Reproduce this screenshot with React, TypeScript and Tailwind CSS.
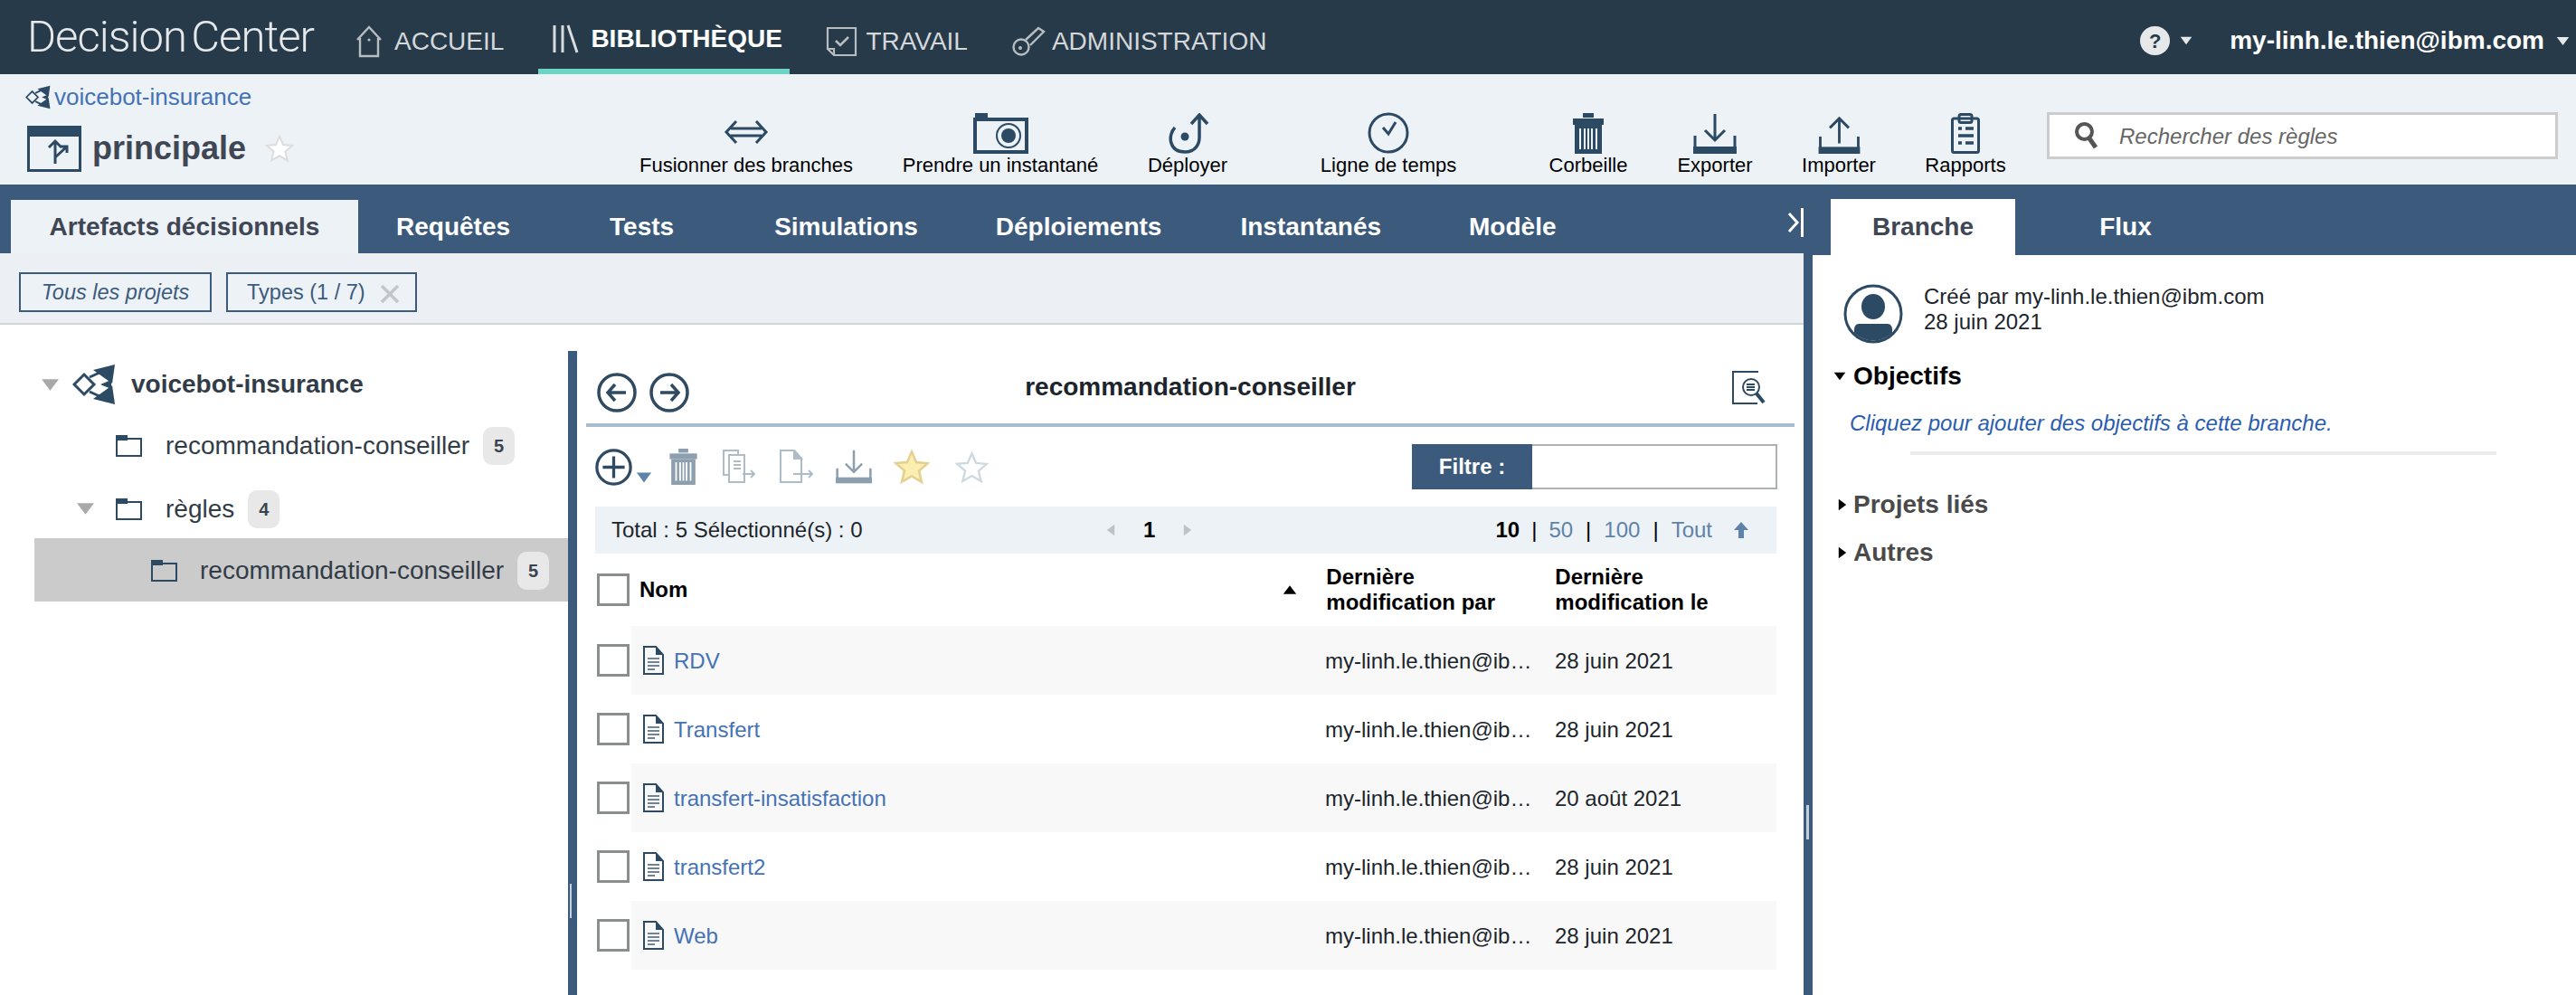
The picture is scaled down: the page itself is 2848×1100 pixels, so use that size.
import { ReactNode } from "react"

const navy = "#2c4a63"

const Home = () => (
    <svg width="30" height="36" viewBox="0 0 30 36" fill="none" stroke="#b9bdc0" strokeWidth="2.4">
        <path d="M2 16 15 2l13 14M5 14v20h20V14" />
        <circle cx="15" cy="16" r="1.6" fill="#b9bdc0" stroke="none" />
    </svg>
)

const Library = () => (
    <svg width="30" height="34" viewBox="0 0 30 34" fill="none" stroke="#d9dcde" strokeWidth="3">
        <path d="M3 2v30M12 2v30M18 2l10 30" />
    </svg>
)

const Task = () => (
    <svg width="35" height="34" viewBox="0 0 35 34" fill="none" stroke="#b9bdc0" strokeWidth="2.2">
        <path d="M2 2h31v30H9l-7-7z" />
        <path d="M2 25h7v7" />
        <path d="m11 16 5 5 9-9" strokeWidth="2.6" />
    </svg>
)

const Key = () => (
    <svg width="37" height="34" viewBox="0 0 37 34" fill="none" stroke="#b9bdc0" strokeWidth="2.4">
        <circle cx="10" cy="23" r="8.5" />
        <circle cx="9" cy="24" r="2" fill="#b9bdc0" stroke="none" />
        <path d="m15 15 14-13 6 4-15 15" />
    </svg>
)

const ProjectIcon = ({ w, h }: { w: number, h: number }) => (
    <svg width={w} height={h} viewBox="0 0 48 44" className="shrink-0">
        <path d="M2 22 13 11l11 11-11 11z" fill="none" stroke={navy} strokeWidth="3" />
        <path d="M47 0 23 6l21 15z" fill={navy} />
        <path d="M47 44 23 38l21-15z" fill={navy} />
        <path d="M31 22l12-5v10z" fill={navy} />
        <path d="M19 14 30 9M19 30l11 5" stroke={navy} strokeWidth="3" />
    </svg>
)

const BranchIcon = () => (
    <svg width="60" height="51" viewBox="0 0 60 51" fill="none">
        <rect x="1.5" y="1.5" width="57" height="48" stroke={navy} strokeWidth="3" />
        <rect x="0" y="0" width="60" height="12" fill={navy} />
        <path d="M31 42V17M24 24l7-7 7 7M31 35l13-12M37 23h7v7" stroke={navy} strokeWidth="3" />
    </svg>
)

const Star = ({ size, fill, stroke }: { size: number, fill: string, stroke: string }) => (
    <svg width={size} height={size} viewBox="0 0 24 24" fill={fill} stroke={stroke} strokeWidth="1.5" className="shrink-0">
        <path d="m12 2 3 7 7.6.7-5.8 5 1.8 7.4L12 18.2 5.4 22l1.8-7.4-5.8-5L9 9z" />
    </svg>
)

const Caret = ({ size = 20, color = "#a9a9a9", dir = "down" }: { size?: number, color?: string, dir?: string }) => (
    <svg width={size} height={size} viewBox="0 0 20 20" fill={color} className="shrink-0">
        {dir === "down" && <path d="M1 4h18L10 16z" />}
        {dir === "up" && <path d="M1 16h18L10 4z" />}
        {dir === "right" && <path d="M4 1v18l12-9z" />}
        {dir === "left" && <path d="M16 1v18L4 10z" />}
    </svg>
)

const Folder = () => (
    <svg width="29" height="24" viewBox="0 0 29 24" fill="none" className="shrink-0">
        <rect x="1" y="4" width="27" height="19" stroke={navy} strokeWidth="2" />
        <rect x="0" y="0" width="13" height="6" fill={navy} />
    </svg>
)

const FileIcon = () => (
    <svg width="23" height="32" viewBox="0 0 23 32" fill="none" className="shrink-0">
        <path d="M1 1h13l8 9v21H1z" stroke={navy} strokeWidth="2" />
        <path d="M14 1v9h8z" fill={navy} />
        <path d="M5 14h13M5 18h13M5 22h13M5 26h8" stroke="#6f8497" strokeWidth="2" />
    </svg>
)

const Merge = () => (
    <svg width="50" height="28" viewBox="0 0 50 28" fill="none" stroke={navy} strokeWidth="3" className="mb-[10px]">
        <path d="M14 2 3 14l11 12M36 2l11 12-11 12M8 10h34M8 18h34" />
    </svg>
)

const Camera = () => (
    <svg width="61" height="45" viewBox="0 0 61 45" fill="none" stroke={navy}>
        <rect x="2" y="7" width="57" height="36" strokeWidth="4" />
        <rect x="2" y="0" width="14" height="8" fill={navy} stroke="none" />
        <circle cx="39" cy="25" r="13" strokeWidth="2" />
        <circle cx="39" cy="25" r="8" fill={navy} stroke="none" />
    </svg>
)

const Deploy = () => (
    <svg width="47" height="45" viewBox="0 0 47 45" fill="none" stroke={navy} strokeWidth="3.5">
        <path d="M9 16C1 24 2 43 20 43c12 0 16-9 16-16V3M27 12l9-10 9 10" />
        <circle cx="20" cy="26" r="4.5" fill={navy} stroke="none" />
    </svg>
)

const Clock = () => (
    <svg width="46" height="46" viewBox="0 0 46 46" fill="none" stroke={navy}>
        <circle cx="23" cy="23" r="21" strokeWidth="3" />
        <path d="m17 17 6 7 8-13" strokeWidth="3" />
    </svg>
)

const Trash = ({ w, h, color }: { w: number, h: number, color: string }) => (
    <svg width={w} height={h} viewBox="0 0 34 45" fill={color}>
        <rect x="11" y="0" width="12" height="5" />
        <rect x="0" y="6" width="34" height="7" />
        <path fillRule="evenodd" d="M2 13h30v32H2zM7 17v23h2V17zM12 17v23h2V17zM16 17v23h2V17zM20 17v23h2V17zM25 17v23h2V17z" />
    </svg>
)

const Tray = ({ up, color, w, h }: { up?: boolean, color: string, w: number, h: number }) => (
    <svg width={w} height={h} viewBox="0 0 48 44" fill="none" stroke={color} strokeWidth="3">
        <path d="M2 24v15h44V24" />
        <rect x="0" y="36" width="48" height="8" fill={color} stroke="none" />
        {up ? <path d="M24 32V3M13 14 24 3l11 11" /> : <path d="M24 0v29M13 18l11 11 11-11" />}
    </svg>
)

const Report = () => (
    <svg width="32" height="45" viewBox="0 0 32 45" fill="none">
        <rect x="1.5" y="6" width="29" height="37.5" rx="2" stroke={navy} strokeWidth="3" />
        <rect x="9" y="1.5" width="14" height="9" rx="2" stroke={navy} strokeWidth="3" />
        <path d="M8 17h4M16 17h9M8 25h17M8 33h4M16 33h9" stroke={navy} strokeWidth="3.5" />
    </svg>
)

const Search = () => (
    <svg width="27" height="32" viewBox="0 0 27 32" fill="none" stroke="#555" className="shrink-0">
        <circle cx="11.5" cy="11.5" r="8.5" strokeWidth="4" />
        <path d="m17 19 7 10" strokeWidth="5" />
    </svg>
)

const Circled = ({ d, w = 44 }: { d: string, w?: number }) => (
    <svg width={w} height={w} viewBox="0 0 44 44" fill="none" stroke="#2f4a61" strokeWidth="3.5" className="shrink-0">
        <circle cx="22" cy="22" r="20" />
        <path d={d} />
    </svg>
)

const CopyTo = () => (
    <svg width="37" height="38" viewBox="0 0 37 38" fill="none" stroke="#aebcc8" strokeWidth="2">
        <path d="M7 28H1V1h16v5" />
        <path d="M7 6h17v30H7zM12 13h8M12 17h8M12 21h8M22 27h13M31 23l4 4-4 4" />
    </svg>
)

const DocTo = () => (
    <svg width="38" height="38" viewBox="0 0 38 38" fill="none" stroke="#aebcc8" strokeWidth="2">
        <path d="M1 1h15l8 9v26H1zM15 27h21M32 23l4 4-4 4" />
        <path d="M16 1v9h8z" fill="#aebcc8" />
    </svg>
)

const DocSearch = () => (
    <svg width="37" height="37" viewBox="0 0 37 37" fill="none" stroke={navy} strokeWidth="2">
        <path d="M29 1H1v35h27" />
        <circle cx="21" cy="18" r="9" />
        <path d="M16 15h9M16 18h9M16 21h9" />
        <path d="m27 25 8 10" strokeWidth="4" />
    </svg>
)

const Avatar = () => (
    <svg width="66" height="66" viewBox="0 0 66 66" className="shrink-0">
        <circle cx="33" cy="33" r="31" fill="#fff" stroke={navy} strokeWidth="3" />
        <ellipse cx="33" cy="25" rx="13" ry="14" fill={navy} />
        <path d="M17 44h32c3 0 5 3 5 6v4a30 30 0 0 1-42 0v-4c0-3 2-6 5-6z" fill={navy} />
    </svg>
)

const NavItem = ({ icon, label, gap, ml, active }: { icon: ReactNode, label: string, gap: string, ml: string, active?: boolean }) => (
    <div className={`flex items-center pt-[10px] ${ml} ${gap} ${active ? "border-b-[6px] border-[#6dd3c2] w-[278px] pl-[15px] text-white font-bold" : "text-[#d5d8da]"}`}>
        {icon}
        <span>{label}</span>
    </div>
)

const Action = ({ icon, label, width }: { icon: ReactNode, label: string, width: string }) => (
    <div className={`flex flex-col items-center justify-end pb-[8px] text-[22px] leading-[26px] text-black ${width}`}>
        <div className="flex h-[48px] items-end">{icon}</div>
        <span className="whitespace-nowrap">{label}</span>
    </div>
)

const Badge = ({ n }: { n: number }) => (
    <span className="flex h-[42px] w-[35px] shrink-0 items-center justify-center rounded-[10px] bg-[#e8e8e8] text-[20px] font-bold text-[#3a4450]">{n}</span>
)

const Checkbox = () => <div className="h-[36px] w-[36px] shrink-0 border-[3px] border-[#8a8f8c] bg-white"></div>

const rows = [
    { name: "RDV", date: "28 juin 2021" },
    { name: "Transfert", date: "28 juin 2021" },
    { name: "transfert-insatisfaction", date: "20 août 2021" },
    { name: "transfert2", date: "28 juin 2021" },
    { name: "Web", date: "28 juin 2021" },
]

const App = () => {
    return (
        <div className="flex h-[1100px] w-[2848px] flex-col overflow-hidden bg-white font-['Liberation_Sans',Arial,sans-serif]">

            <div className="flex h-[82px] shrink-0 items-stretch bg-[#263a4a] pl-[30px] text-[28px]">
                <div className="flex w-[317px] items-center justify-between whitespace-nowrap font-['Roboto',sans-serif] text-[49px] font-light tracking-[-1px] text-[#e6e8ea]">
                    <span>Decision</span><span>Center</span>
                </div>
                <NavItem icon={<Home />} label="ACCUEIL" gap="gap-[13px]" ml="ml-[46px]" />
                <NavItem icon={<Library />} label="BIBLIOTHÈQUE" gap="gap-[13px]" ml="ml-[38px]" active />
                <NavItem icon={<Task />} label="TRAVAIL" gap="gap-[9px]" ml="ml-[40px]" />
                <NavItem icon={<Key />} label="ADMINISTRATION" gap="gap-[7px]" ml="ml-[49px]" />
                <div className="ml-auto flex items-center pr-[7px] pt-[8px]">
                    <span className="flex h-[32px] w-[33px] items-center justify-center rounded-full bg-[#e6e8ea] text-[22px] font-bold text-[#263a4a]">?</span>
                    <span className="ml-[11px]"><Caret size={14} color="#e6e8ea" /></span>
                    <span className="ml-[41px] font-bold text-white">my-linh.le.thien@ibm.com</span>
                    <span className="ml-[13px]"><Caret size={15} color="#e6e8ea" /></span>
                </div>
            </div>

            <div className="flex h-[122px] shrink-0 bg-[#edf2f6]">
                <div className="w-[690px] pl-[28px] pt-[10px]">
                    <div className="flex h-[30px] items-center gap-[4px] text-[26px] text-[#4472b5]">
                        <ProjectIcon w={28} h={27} />
                        <span>voicebot-insurance</span>
                    </div>
                    <div className="mt-[15px] flex items-center pl-[2px]">
                        <BranchIcon />
                        <span className="ml-[12px] text-[36px] font-bold text-[#3f4654]">principale</span>
                        <span className="ml-[21px]"><Star size={32} fill="#ffffff" stroke="#dddddd" /></span>
                    </div>
                </div>
                <Action icon={<Merge />} label="Fusionner des branches" width="w-[270px]" />
                <Action icon={<Camera />} label="Prendre un instantané" width="w-[292px]" />
                <Action icon={<Deploy />} label="Déployer" width="w-[122px]" />
                <Action icon={<Clock />} label="Ligne de temps" width="w-[322px]" />
                <Action icon={<Trash w={34} h={45} color={navy} />} label="Corbeille" width="w-[120px]" />
                <Action icon={<Tray color={navy} w={48} h={44} />} label="Exporter" width="w-[160px]" />
                <Action icon={<Tray up color={navy} w={47} h={42} />} label="Importer" width="w-[114px]" />
                <Action icon={<Report />} label="Rapports" width="w-[166px]" />
                <div className="ml-[7px] mt-[42px] flex h-[52px] w-[565px] items-center border-[3px] border-[#cccccc] bg-white pl-[27px]">
                    <Search />
                    <span className="ml-[23px] mt-[2px] text-[24px] italic text-[#666666]">Rechercher des règles</span>
                </div>
            </div>

            <div className="flex min-h-0 flex-1">
                <div className="flex w-[1994px] flex-col">
                    <div className="flex h-[76px] shrink-0 items-end bg-[#3c5b7c] pl-[12px] text-[28px] font-bold text-white">
                        <div className="flex h-[59px] w-[384px] items-center justify-center bg-[#edf2f6] text-[#3f4654]">Artefacts décisionnels</div>
                        <div className="flex h-full items-center pt-[18px]">
                            <span className="ml-[42px]">Requêtes</span>
                            <span className="ml-[110px]">Tests</span>
                            <span className="ml-[111px]">Simulations</span>
                            <span className="ml-[86px]">Déploiements</span>
                            <span className="ml-[87px]">Instantanés</span>
                            <span className="ml-[97px]">Modèle</span>
                        </div>
                        <svg width="19" height="32" viewBox="0 0 19 32" fill="none" stroke="#fff" className="mb-[18px] ml-auto">
                            <path d="m3 6 9 10-9 10" strokeWidth="3" />
                            <path d="M17.5 0v32" strokeWidth="3" />
                        </svg>
                    </div>

                    <div className="flex h-[79px] shrink-0 gap-[16px] border-b-2 border-[#ccd6d8] bg-[#ecf0f4] pl-[21px] pt-[21px] text-[23.5px] text-[#3c5b7c]">
                        <div className="flex h-[44px] w-[213px] items-center justify-center border-2 border-[#3c5b7c] bg-[#edf2f6] pt-[2px] italic">Tous les projets</div>
                        <div className="flex h-[44px] w-[211px] items-center border-2 border-[#3c5b7c] bg-[#edf2f6] pl-[21px] pt-[2px]">
                            <span>Types (1 / 7)</span>
                            <svg width="20" height="20" viewBox="0 0 20 20" stroke="#c4c7c9" strokeWidth="3.5" className="ml-[17px] mt-[2px]">
                                <path d="m1 1 18 18M19 1 1 19" />
                            </svg>
                        </div>
                    </div>

                    <div className="flex min-h-0 flex-1">
                        <div className="w-[628px] shrink-0 pt-[31px] text-[28px] text-[#323c47]">
                            <div className="flex h-[70px] items-center pl-[45px]">
                                <Caret size={21} />
                                <span className="ml-[14px]"><ProjectIcon w={48} h={44} /></span>
                                <span className="ml-[17px] font-bold">voicebot-insurance</span>
                            </div>
                            <div className="flex h-[65px] items-center gap-[26px] pl-[128px]">
                                <Folder />
                                <div className="flex items-center gap-[15px]">
                                    <span>recommandation-conseiller</span>
                                    <Badge n={5} />
                                </div>
                            </div>
                            <div className="flex h-[70px] items-center pl-[84px] pt-[5px]">
                                <Caret size={21} />
                                <span className="ml-[23px]"><Folder /></span>
                                <span className="ml-[26px]">règles</span>
                                <span className="ml-[15px]"><Badge n={4} /></span>
                            </div>
                            <div className="ml-[38px] flex h-[70px] items-center bg-[#cbcbcb] pl-[129px] pt-[2px]">
                                <Folder />
                                <span className="ml-[25px]">recommandation-conseiller</span>
                                <span className="ml-[15px]"><Badge n={5} /></span>
                            </div>
                        </div>

                        <div className="relative mt-[29px] w-[10px] shrink-0 bg-[#3c5b7c]">
                            <div className="absolute left-[2px] top-[589px] h-[38px] w-[2px] bg-[#c4cfdb]"></div>
                        </div>

                        <div className="mt-[29px] flex-1">
                            <div className="mx-[10px] grid h-[84px] grid-cols-3 items-center border-b-4 border-[#a9bccd]">
                                <div className="flex gap-[14px] pl-[12px] pt-[12px]">
                                    <Circled d="M32 22H12M20 13l-8 9 8 9" />
                                    <Circled d="M12 22h20M24 13l8 9-8 9" />
                                </div>
                                <div className="whitespace-nowrap text-center text-[28px] font-bold text-[#1d252c]">recommandation-conseiller</div>
                                <div className="flex justify-end pr-[32px]"><DocSearch /></div>
                            </div>

                            <div className="ml-[20px] w-[1306px]">
                                <div className="flex h-[88px] items-center">
                                    <div className="flex items-end">
                                        <Circled d="M22 9v26M9 22h26" w={41} />
                                        <span className="ml-[4px]"><Caret size={18} color="#5f83a8" /></span>
                                    </div>
                                    <span className="ml-[18px]"><Trash w={33} h={40} color="#8d9fae" /></span>
                                    <span className="ml-[27px]"><CopyTo /></span>
                                    <span className="ml-[26px]"><DocTo /></span>
                                    <span className="ml-[24px]"><Tray color="#8d9fae" w={40} h={40} /></span>
                                    <span className="ml-[24px]"><Star size={40} fill="#fbeeb0" stroke="#e4d08f" /></span>
                                    <span className="ml-[28px]"><Star size={37} fill="#ffffff" stroke="#ced8df" /></span>
                                    <div className="ml-auto mr-[-1px] flex h-[50px] w-[404px]">
                                        <span className="flex w-[133px] items-center justify-center bg-[#3c5b7c] text-[24px] font-bold text-white">Filtre :</span>
                                        <span className="flex-1 border-2 border-l-0 border-[#adb1b1] bg-white"></span>
                                    </div>
                                </div>

                                <div className="flex h-[52px] items-center bg-[#edf2f6] pl-[18px] pr-[31px] text-[24px] text-[#1d252c]">
                                    <span className="w-[545px] whitespace-nowrap">Total : 5 Sélectionné(s) : 0</span>
                                    <Caret size={14} color="#bcc3c9" dir="left" />
                                    <span className="ml-[29px] font-bold text-black">1</span>
                                    <span className="ml-[29px]"><Caret size={14} color="#bcc3c9" dir="right" /></span>
                                    <div className="ml-auto flex items-center text-[#5f83a8]">
                                        <span className="font-bold text-black">10</span>
                                        <span className="mx-[13px] text-black">|</span>
                                        <span>50</span>
                                        <span className="mx-[14px] text-black">|</span>
                                        <span>100</span>
                                        <span className="mx-[14px] text-black">|</span>
                                        <span>Tout</span>
                                        <svg width="16" height="22" viewBox="0 0 16 22" fill="#5f83a8" className="ml-[24px]">
                                            <path d="M8 2 16 11h-5v9H5v-9H0z" />
                                        </svg>
                                    </div>
                                </div>

                                <div className="flex h-[80px] items-center text-[24px] font-bold leading-[28px] text-black">
                                    <span className="ml-[2px]"><Checkbox /></span>
                                    <span className="ml-[11px]">Nom</span>
                                    <span className="ml-[658px]"><Caret size={16} color="#000" dir="up" /></span>
                                    <span className="ml-[32px] w-[253px]">Dernière<br />modification par</span>
                                    <span>Dernière<br />modification le</span>
                                </div>

                                {rows.map((row, i) => (
                                    <div className="flex h-[76px] items-center" key={row.name}>
                                        <div className="w-[40px] pl-[2px]"><Checkbox /></div>
                                        <div className={`flex h-full flex-1 items-center pl-[13px] text-[24px] ${i % 2 === 0 ? "bg-[#f8f8f8]" : ""}`}>
                                            <FileIcon />
                                            <span className="ml-[11px] mt-[2px] w-[720px] text-[#4472b5]">{row.name}</span>
                                            <span className="mt-[2px] w-[254px] whitespace-nowrap text-[#1d252c]">my-linh.le.thien@ib…</span>
                                            <span className="mt-[2px] whitespace-nowrap text-[#1d252c]">{row.date}</span>
                                        </div>
                                    </div>
                                ))}
                            </div>
                        </div>
                    </div>
                </div>

                <div className="flex w-[854px] flex-col">
                    <div className="flex h-[78px] shrink-0 items-end bg-[#3c5b7c] pl-[30px] text-[28px] font-bold">
                        <div className="flex h-[62px] w-[204px] items-center justify-center bg-white text-[#3f4654]">Branche</div>
                        <div className="flex h-[62px] w-[244px] items-center justify-center text-white">Flux</div>
                    </div>
                    <div className="relative flex-1 border-l-[10px] border-[#3c5b7c] pl-[23px] pt-[32px]">
                        <div className="absolute left-[-7px] top-[608px] h-[38px] w-[3px] bg-[#c4cfdb]"></div>
                        <div className="flex pl-[11px]">
                            <Avatar />
                            <div className="ml-[23px] text-[24px] leading-[28px] text-[#1d252c]">
                                <div>Créé par my-linh.le.thien@ibm.com</div>
                                <div>28 juin 2021</div>
                            </div>
                        </div>
                        <div className="mt-[15px] flex items-center text-[28px] font-bold text-black">
                            <Caret size={14} color="#000" />
                            <span className="ml-[8px]">Objectifs</span>
                        </div>
                        <div className="mt-[13px] pl-[18px] text-[24px] italic text-[#2a5db0]">Cliquez pour ajouter des objectifs à cette branche.</div>
                        <div className="ml-[85px] mt-[13px] h-[4px] w-[648px] bg-[#ebebeb]"></div>
                        <div className="mt-[34px] flex items-center pl-[3px] text-[28px] font-bold text-[#4a4a4a]">
                            <Caret size={14} color="#000" dir="right" />
                            <span className="ml-[5px]">Projets liés</span>
                        </div>
                        <div className="mt-[11px] flex items-center pl-[3px] text-[28px] font-bold text-[#4a4a4a]">
                            <Caret size={14} color="#000" dir="right" />
                            <span className="ml-[5px]">Autres</span>
                        </div>
                    </div>
                </div>
            </div>

        </div>
    )
}

export default App
